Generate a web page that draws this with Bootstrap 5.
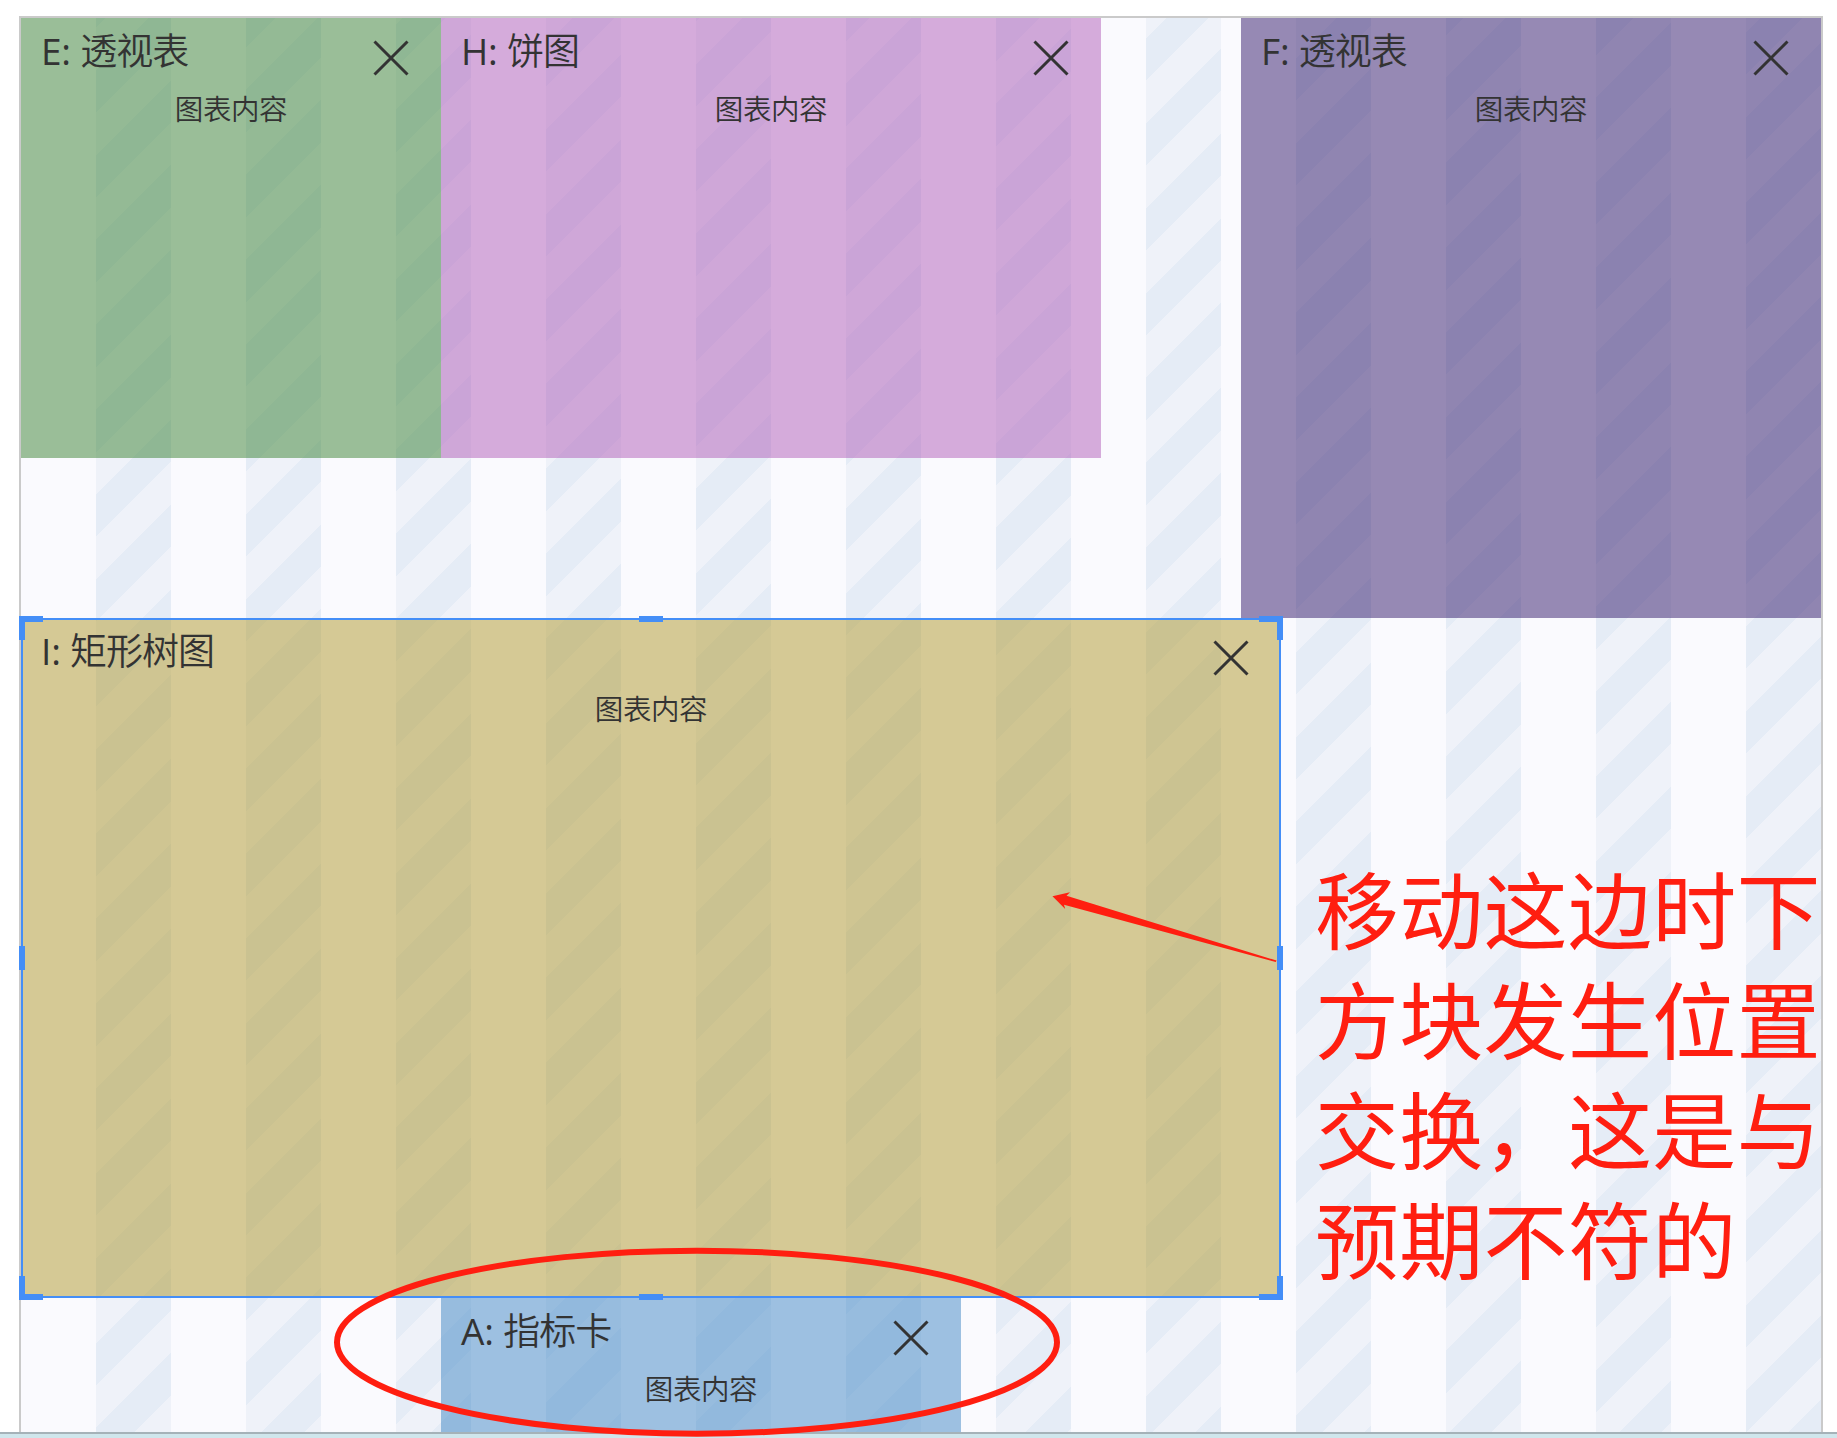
<!DOCTYPE html>
<html lang="zh-CN">
<head>
<meta charset="utf-8">
<title>图表布局</title>
<link rel="stylesheet" href="https://cdn.jsdelivr.net/npm/bootstrap@5.3.0/dist/css/bootstrap.min.css">
<style>
  body { font-family: "Open Sans", "Noto Sans CJK SC", sans-serif; color: #333; height: 1438px; overflow: hidden; }
  .stage { padding: 16px 14px 0 19px; height: 1432px; }
  .board {
    width: 1804px; height: 1416px;
    border: 2px solid #cacaca; border-bottom: 0;
    display: grid;
    grid-template-columns: repeat(90, 20px);
    grid-template-rows: repeat(64, 20px) 134px;
    background:
      repeating-linear-gradient(90deg, #fafafe 0 75px, transparent 75px 150px) padding-box,
      repeating-linear-gradient(135deg, #eff2f9 0 30px, #e5ecf6 30px 60px) padding-box;
  }
  .tile-e { grid-area: 1 / 1 / 23 / 22;   background: rgba(58,130,50,.5); }
  .tile-h { grid-area: 1 / 22 / 23 / 55;  background: rgba(176,92,184,.5); }
  .tile-f { grid-area: 1 / 62 / 31 / 91;  background: rgba(50,24,106,.5); }
  .tile-i { grid-area: 31 / 1 / 65 / 64;  background: rgba(176,152,44,.5); }
  .tile-a { grid-area: 65 / 22 / 66 / 48; background: rgba(64,134,196,.5); }
  .tile-head { height: 74px; padding: 0 32px 0 20px; }
  .tile-title { font-family: "Noto Sans CJK SC", sans-serif; font-weight: 350; font-size: 37px; letter-spacing: -1px; line-height: 36px; padding-top: 13px; white-space: pre; }
  .tile-title span { font-family: "Open Sans", sans-serif; font-weight: 400; font-size: 37px; letter-spacing: -.2px; }
  .tile-close { width: 36px; height: 36px; margin-top: 22px; stroke: #333; stroke-width: 3; }
  .tile-body { font-family: "Noto Sans CJK SC", sans-serif; font-weight: 350; font-size: 28.5px; letter-spacing: -.4px; line-height: 36px; margin-top: -2px; }
  .frame { border: 2px solid #448ef7; }
  .grip { position: absolute; border: 0 solid #448ef7; width: 24px; height: 24px; }
  .g-tl { left: -4px; top: -4px; border-width: 6px 0 0 6px; }
  .g-tr { right: -4px; top: -4px; border-width: 6px 6px 0 0; }
  .g-bl { left: -4px; bottom: -4px; border-width: 0 0 6px 6px; }
  .g-br { right: -4px; bottom: -4px; border-width: 0 6px 6px 0; }
  .g-t { left: 616px; top: -4px; border-top-width: 6px; }
  .g-b { left: 616px; bottom: -4px; border-bottom-width: 6px; }
  .g-l { left: -4px; top: 326px; border-left-width: 6px; }
  .g-r { right: -4px; top: 326px; border-right-width: 6px; }
  .footer-strip { height: 6px; background: #cfe6ec; border-top: 2px solid #a5b2b8; }
  .remark { left: 1315px; top: 852px; width: 512px; font-family: "Noto Sans CJK SC", sans-serif; font-weight: 400; font-size: 84px; letter-spacing: .3px; line-height: 110px; color: #ff1e10; white-space: nowrap; }
  .marks { left: 0; top: 0; pointer-events: none; }
</style>
<script src="https://cdn.jsdelivr.net/npm/bootstrap@5.3.0/dist/js/bootstrap.bundle.min.js"></script>
</head>
<body class="position-relative bg-white m-0">
<main class="stage">
  <div class="board">
    <section class="tile-e">
      <div class="tile-head d-flex justify-content-between align-items-start">
        <div class="tile-title"><span>E: </span>透视表</div>
        <svg class="tile-close" viewBox="0 0 36 36"><path d="M1.5 1.5L34.5 34.5M34.5 1.5L1.5 34.5"/></svg>
      </div>
      <div class="tile-body text-center">图表内容</div>
    </section>
    <section class="tile-h">
      <div class="tile-head d-flex justify-content-between align-items-start">
        <div class="tile-title"><span>H: </span>饼图</div>
        <svg class="tile-close" viewBox="0 0 36 36"><path d="M1.5 1.5L34.5 34.5M34.5 1.5L1.5 34.5"/></svg>
      </div>
      <div class="tile-body text-center">图表内容</div>
    </section>
    <section class="tile-f">
      <div class="tile-head d-flex justify-content-between align-items-start">
        <div class="tile-title"><span>F: </span>透视表</div>
        <svg class="tile-close" viewBox="0 0 36 36"><path d="M1.5 1.5L34.5 34.5M34.5 1.5L1.5 34.5"/></svg>
      </div>
      <div class="tile-body text-center">图表内容</div>
    </section>
    <section class="tile-i position-relative">
      <div class="frame position-absolute top-0 start-0 w-100 h-100">
        <i class="grip g-tl"></i><i class="grip g-t"></i><i class="grip g-tr"></i>
        <i class="grip g-l"></i><i class="grip g-r"></i>
        <i class="grip g-bl"></i><i class="grip g-b"></i><i class="grip g-br"></i>
      </div>
      <div class="tile-head d-flex justify-content-between align-items-start">
        <div class="tile-title"><span>I: </span>矩形树图</div>
        <svg class="tile-close" viewBox="0 0 36 36"><path d="M1.5 1.5L34.5 34.5M34.5 1.5L1.5 34.5"/></svg>
      </div>
      <div class="tile-body text-center">图表内容</div>
    </section>
    <section class="tile-a">
      <div class="tile-head d-flex justify-content-between align-items-start">
        <div class="tile-title"><span>A: </span>指标卡</div>
        <svg class="tile-close" viewBox="0 0 36 36"><path d="M1.5 1.5L34.5 34.5M34.5 1.5L1.5 34.5"/></svg>
      </div>
      <div class="tile-body text-center">图表内容</div>
    </section>
  </div>
</main>
<footer class="footer-strip"></footer>
<div class="remark position-absolute">移动这边时下<br>方块发生位置<br>交换，这是与<br>预期不符的</div>
<svg class="marks position-absolute" width="1837" height="1438" viewBox="0 0 1837 1438">
  <ellipse cx="697" cy="1342.2" rx="360" ry="91.5" fill="none" stroke="#ff1e10" stroke-width="6"/>
  <path d="M1052.5 896.3L1070 892.2L1066.5 895.7L1276.5 960.6L1275.8 962L1064 904.8L1065.2 909Z" fill="#ff1e10"/>
</svg>
</body>
</html>
